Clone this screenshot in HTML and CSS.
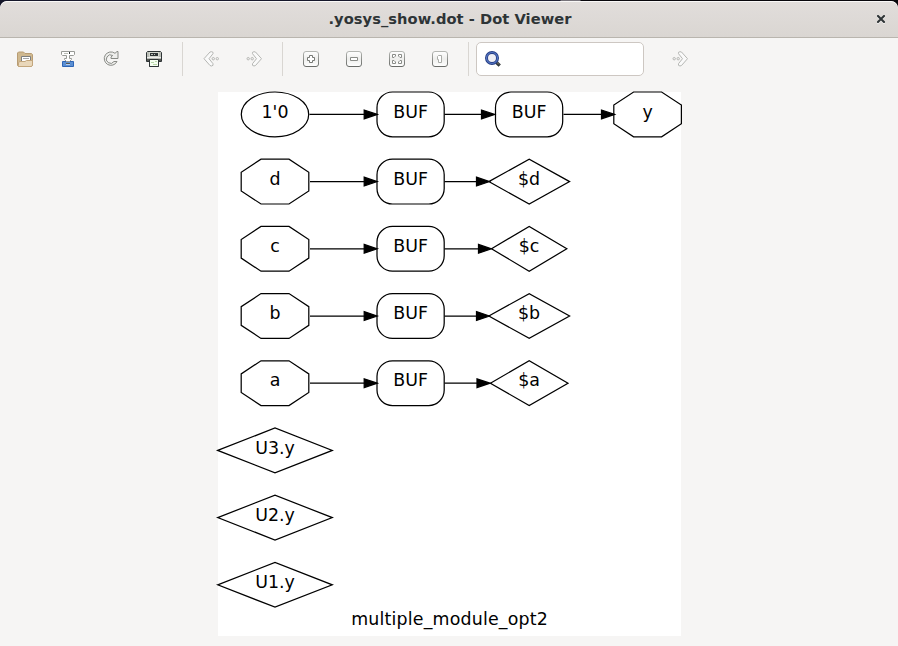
FILE: index.html
```html
<!DOCTYPE html>
<html lang="en">
<head>
<meta charset="utf-8">
<title>.yosys_show.dot - Dot Viewer</title>
<link rel="stylesheet" href="styles.css">
</head>
<body>
<div class="window">
  <header class="titlebar">
    <h1 class="title">.yosys_show.dot - Dot Viewer</h1>
    <button class="close" aria-label="Close"><svg width="8" height="8" viewBox="0 0 8 8"><path d="M1 1L7 7M7 1L1 7" stroke="#2e3436" stroke-width="2" stroke-linecap="square"/></svg></button>
  </header>
  <nav class="toolbar">
    <button class="tool" aria-label="Open"><svg class="icon" viewBox="0 0 16 16"><path d="M.5 14.5V2L1.500 1H6.500L8 2.500H14.500L15.500 3.500V14.500L14.500 15.500H1.500Z" fill="#cfb88f" stroke="#b89c73"/><path d="M4.500 11V5.500H13.500V10" fill="#fff" stroke="#7d7f80"/><path d="M6 7.500H12" stroke="#a5a7a8"/><path d="M1.500 14.500V11.500L3 10.500H8L9.500 9.500H15.500V14L14.500 15.500H1.500Z" fill="#e9d7ba" stroke="#c3a67c"/></svg></button>
    <button class="tool" aria-label="Export"><svg class="icon" viewBox="0 0 16 16"><path d="M2.500 10.500H13.500V15.500H2.500Z" fill="#5b8fd3" stroke="#2f65b5"/><path d="M1.500 .5H14.500V3.500L13.500 4.500H9.500V7.500H11.500V8.500L9.500 10.500H6.500L4.500 8.500V7.500H6.500V4.500H2.500L1.500 3.500Z" fill="#fff" stroke="#989a96"/><path d="M4 2.500H8" stroke="#babdb6"/><path d="M9.500 1V3" stroke="#2e3436"/><path d="M6 12.500H10" stroke="#555753"/><path d="M6 13.500H10" stroke="#b5cdee"/></svg></button>
    <button class="tool" aria-label="Reload"><svg class="icon" viewBox="0 0 16 16"><path d="M12 2.300L14 .5H15V7.500H8V6L9.700 4.500A4.200 4.200 0 1 0 11 10.500H14A6.700 6.700 0 1 1 12 2.300Z" fill="#eeeeec" stroke="#888a85"/></svg></button>
    <button class="tool" aria-label="Print"><svg class="icon" viewBox="0 0 16 16"><path d="M.5 1.500L1.500 .5H14.500L15.500 1.500V10.500H12.500V15.500H3.500V10.500H.5Z" fill="#babdb6" stroke="#2e3436"/><path d="M3 1H13V6H3Z" fill="#d3d7cf"/><path d="M4 2H12V5H4Z" fill="#2e3436"/><path d="M5 3.500H7M8 3.500H9" stroke="#babdb6"/><path d="M1 6.500H15" stroke="#eee"/><path d="M1 8H15V10H1Z" fill="#555753"/><path d="M3.500 8.500H12.500V15.500H3.500Z" fill="#f6fff2" stroke="#2e3436"/><path d="M5 11.500H8M7 13.500H11M9 10.500H11" stroke="#b8d8a8"/></svg></button>
    <span class="sep"></span>
    <button class="tool" aria-label="Back"><svg class="icon faded" viewBox="0 0 16 16"><use href="#arrow" transform="translate(16.500 0) scale(-1 1)"/></svg></button>
    <button class="tool" aria-label="Forward"><svg class="icon faded" viewBox="0 0 16 16"><g id="arrow"><path d="M8 .7L9.500 1L15.500 7.700L9.500 14.500L8 15L6.500 14.300V12.700L10.500 7.700L6.500 2.700V1.300Z" fill="#fafafa"/><circle cx="2.200" cy="7.700" r="1.200"/><circle cx="6.200" cy="7.700" r="1.200"/></g></svg></button>
    <span class="sep"></span>
    <button class="tool" aria-label="Zoom in"><svg class="icon" viewBox="0 0 16 16"><defs><linearGradient id="edge" x2="0" y2="1"><stop stop-color="#b4b6b2"/><stop offset="1" stop-color="#6a6c69"/></linearGradient><linearGradient id="face" x2="0" y2="1"><stop stop-color="#fff"/><stop offset=".5" stop-color="#eeeeec"/><stop offset="1" stop-color="#fff"/></linearGradient><rect id="key" x=".5" y=".5" width="15" height="15" rx="2.500" fill="url(#face)" stroke="url(#edge)"/></defs><use href="#key"/><path d="M6.500 4.500H9.500V6.500H11.500V9.500H9.500V11.500H6.500V9.500H4.500V6.500H6.500Z" fill="#fff" stroke="#777975"/></svg></button>
    <button class="tool" aria-label="Zoom out"><svg class="icon" viewBox="0 0 16 16"><use href="#key"/><path d="M4.500 6.500H11.500V9.500H4.500Z" fill="#fff" stroke="#8a8c88"/></svg></button>
    <button class="tool" aria-label="Zoom to fit"><svg class="icon" viewBox="0 0 16 16"><use href="#key"/><g fill="#fff" stroke="#8a8c88"><path id="corner" d="M3.500 3.500H6.500V5L5 6.500H3.500Z"/><use href="#corner" transform="translate(16 0) scale(-1 1)"/><use href="#corner" transform="translate(0 16) scale(1 -1)"/><use href="#corner" transform="translate(16 16) scale(-1 -1)"/></g></svg></button>
    <button class="tool" aria-label="Normal size"><svg class="icon" viewBox="0 0 16 16"><use href="#key"/><path d="M5.500 5.500L6.500 4.500H9.500V11.500H6.500V8.500H5.500Z" fill="#fff" stroke="#aaaca8"/></svg></button>
    <span class="sep"></span>
    <label class="search"><svg class="icon" viewBox="0 0 16 16"><path d="M11.500 11.500L14.700 14.700" stroke="#2e3436" stroke-width="3.300"/><path d="M11.500 11L14 13.500" stroke="#85827d"/><circle cx="7" cy="7" r="5.500" fill="#eeeef4" stroke="#263e83" stroke-width="3"/><circle cx="7" cy="7" r="5.500" fill="none" stroke="#5375c4" stroke-width="1.200"/></svg><input class="field" type="text" aria-label="Search"></label>
    <button class="tool next" aria-label="Find next"><svg class="icon faded" viewBox="0 0 16 16"><use href="#arrow"/></svg></button>
  </nav>
  <main class="viewer">
    <svg class="graph" width="463" height="544" viewBox="218 92 463 544">
      <defs>
        <path id="oct" d="M-14 -22.400H14L33.800 -9.300V9.300L14 22.400H-14L-33.800 9.300V-9.300Z"/>
        <rect id="box" x="-33.600" y="-22.400" width="67.200" height="44.800" rx="15.500"/>
        <path id="head" d="M0 0L-13 -4.400V4.400Z" fill="#000"/>
      </defs>
      <g class="shapes">
        <ellipse cx="275" cy="114.400" rx="33.700" ry="22.400"/>
        <use href="#box" x="410.600" y="114.400"/><use href="#box" x="529.100" y="114.400"/><use href="#oct" x="647.600" y="114.400"/>
        <path d="M309.500 114.400H366M444.500 114.400H483M563.500 114.400H602"/>
        <use href="#head" x="377.200" y="114.400"/><use href="#head" x="494.500" y="114.400"/><use href="#head" x="614.500" y="114.400"/>

        <use href="#oct" x="275" y="181.600"/><use href="#box" x="410.600" y="181.600"/>
        <path d="M488.800 181.600L529.200 159.200L569.600 181.600L529.200 204Z"/>
        <path d="M310 181.600H366M444.500 181.600H478"/><use href="#head" x="377.200" y="181.600"/><use href="#head" x="489.500" y="181.600"/>

        <use href="#oct" x="275" y="248.800"/><use href="#box" x="410.600" y="248.800"/>
        <path d="M491.500 248.800L529.200 226.400L566.800 248.800L529.200 271.200Z"/>
        <path d="M310 248.800H366M444.500 248.800H480"/><use href="#head" x="377.200" y="248.800"/><use href="#head" x="491.500" y="248.800"/>

        <use href="#oct" x="275" y="316"/><use href="#box" x="410.600" y="316"/>
        <path d="M488.800 316L529.200 293.600L569.600 316L529.200 338.400Z"/>
        <path d="M310 316.200H366M444.500 316.200H478"/><use href="#head" x="377.200" y="316"/><use href="#head" x="489.500" y="316"/>

        <use href="#oct" x="275" y="383.200"/><use href="#box" x="410.600" y="383.200"/>
        <path d="M490.400 383.200L529.200 360.800L568 383.200L529.200 405.600Z"/>
        <path d="M310 383.200H366M444.500 383.200H478"/><use href="#head" x="377.200" y="383.200"/><use href="#head" x="490" y="383.200"/>

        <path d="M217.700 450.400L275 428L332.300 450.400L275 472.800ZM217.700 517.600L275 495.200L332.300 517.600L275 540ZM217.700 584.800L275 562.400L332.300 584.800L275 607.200Z"/>
      </g>
      <g class="labels">
        <text x="275" y="117.500">1'0</text><text x="410.600" y="117.500">BUF</text><text x="529.100" y="117.500">BUF</text><text x="647.600" y="117.500">y</text>
        <text x="275" y="184.700">d</text><text x="410.600" y="184.700">BUF</text><text x="529.100" y="184.700">$d</text>
        <text x="275" y="251.900">c</text><text x="410.600" y="251.900">BUF</text><text x="529.100" y="251.900">$c</text>
        <text x="275" y="319.300">b</text><text x="410.600" y="319.300">BUF</text><text x="529.100" y="319.300">$b</text>
        <text x="275" y="386.300">a</text><text x="410.600" y="386.300">BUF</text><text x="529.100" y="386.300">$a</text>
        <text x="275" y="453.500">U3.y</text><text x="275" y="520.700">U2.y</text><text x="275" y="587.900">U1.y</text>
        <text x="449.500" y="624.500" textLength="196.500">multiple_module_opt2</text>
      </g>
    </svg>
  </main>
</div>
</body>
</html>
```
FILE: styles.css
```css
* { box-sizing: border-box; }
body {
  margin: 0;
  height: 646px;
  padding-top: 1px;
  overflow: hidden;
  background: linear-gradient(90deg, #15172a 0 560px, #77747b 561px 580px, #08070c 581px);
  font-family: "DejaVu Sans", sans-serif;
}
button { border: 0; padding: 0; background: none; }
svg { display: block; fill: none; }
.window {
  height: 645px;
  display: flex;
  flex-direction: column;
  border-radius: 7px 7px 0 0;
  overflow: hidden;
  background: #f6f5f4;
}
.titlebar {
  height: 37px;
  display: grid;
  grid-template-columns: 34px 1fr 34px;
  align-items: center;
  padding-bottom: 2px;
  border-top: 1px solid #f9f8f7;
  border-bottom: 1px solid #b9b5ae;
  border-radius: 7px 7px 0 0;
  background: linear-gradient(#e1dddb, #dad6d2);
}
.title {
  grid-column: 2;
  margin: 0;
  padding-left: 2px;
  text-align: center;
  font-size: 14.67px;
  line-height: 20px;
  letter-spacing: .04px;
  color: #2e3436;
}
.close { display: flex; justify-content: center; filter: drop-shadow(0 1px #fff8); }
.toolbar {
  display: flex;
  align-items: center;
  height: 42px;
  padding-left: 3.5px;
}
.tool { width: 43px; height: 34px; display: flex; align-items: center; justify-content: center; }
.icon { width: 16px; height: 16px; flex: none; }
.faded { stroke: #b5b6b3; }
.sep { width: 1px; height: 34px; margin: 0 6.5px; background: #d9d6d2; }
.search {
  width: 168px;
  height: 34px;
  display: flex;
  align-items: center;
  padding-left: 8px;
  border: 1px solid #cdc7c2;
  border-radius: 5px;
  background: #fff;
}
.field { width: 130px; margin-left: 7px; border: 0; outline: 0; background: none; font: inherit; }
.next { margin-left: 15px; }
.viewer { flex: 1; padding: 12px 0 0 218px; }
.graph { background: #fff; overflow: visible; }
.shapes { stroke: #000; stroke-width: 1.24px; }
.labels { fill: #000; font-size: 17.4px; text-anchor: middle; }
```
